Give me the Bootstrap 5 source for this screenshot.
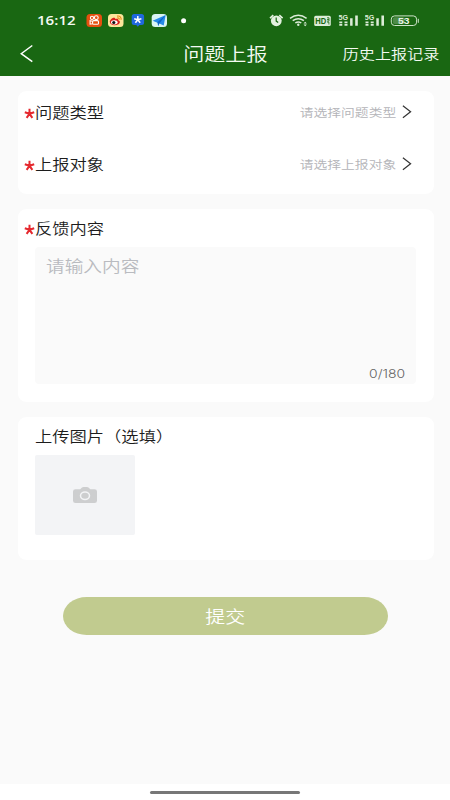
<!DOCTYPE html>
<html lang="zh-CN">
<head>
<meta charset="utf-8">
<meta name="viewport" content="width=device-width, initial-scale=1">
<title>问题上报</title>
<link href="https://cdn.jsdelivr.net/npm/bootstrap@5.3.0/dist/css/bootstrap.min.css" rel="stylesheet">
<style>
  body { font-family: "Noto Sans CJK SC", sans-serif; font-weight: 350; background: #fafafa; color: #1c1c1c; }
  .screen { width: 450px; height: 800px; overflow: hidden; }
  .top { background: #196712; height: 75.5px; color: #f4faf2; }
  .status { height: 40px; padding-left: 37px; }
  .clock { font: 600 13px/16px "Open Sans", sans-serif; width: 49px; }
  .titlebar { height: 26px; }
  .side { width: 120px; }
  /* wide-set lettering */
  .wide { display: inline-block; white-space: nowrap; transform: scaleX(1.16); transform-origin: left center; }
  .wide-end { transform-origin: right center; }
  .wide-mid { transform-origin: center; }
  .t18 { font-size: 18.2px; line-height: 26px; }
  .t14 { font-size: 13.9px; line-height: 22px; margin-right: 3px; }
  .t12 { font-size: 11.9px; line-height: 20px; color: #b4b4b8; margin-right: 6px; }
  .t15 { font-size: 14.9px; line-height: 22px; }
  .t16 { font-size: 16.1px; line-height: 24px; color: #b9bbc0; }
  .t17 { font-size: 17.2px; line-height: 26px; }
  .count { font: 300 12px/16px Inter, sans-serif; color: #666; }
  .panel { background: #fff; border-radius: 9px/8px; margin: 0 16px 15px 18px; padding: 0 18px 0 17px; }
  .panel-pick { height: 103px; padding: 10px 22px 0 6px; }
  .panel-text { height: 193px; padding-left: 6px; padding-top: 8px; }
  .panel-photo { height: 143px; padding-top: 8px; }
  .pick { height: 22px; margin-bottom: 30px; }
  .star { width: 11px; height: 11px; margin-top: 2px; }
  .entry { margin: 8px 0 0 11px; height: 137px; background: #fafafa; border-radius: 4px; padding: 6px 11px 2px 11px; }
  .upload { width: 100px; height: 80px; background: #f3f4f6; border-radius: 2px; margin-top: 8px; }
  .form-body { padding-top: 15.5px; }
  .submit { width: 325px; height: 38.5px; margin: 21.5px 0 0 63px; background: #c1cb8f; color: #fff; border-radius: 24px/19.25px; font-weight: 350; }
  .submit:hover { background: #b7c283; color: #fff; }
  .homebar { height: 16px; background: #fff; }
  .homebar div { width: 150px; height: 3px; background: #777; border-radius: 2px; }
</style>
</head>
<body>
<svg width="0" height="0" class="position-absolute" aria-hidden="true">
  <defs>
    <symbol id="asterisk" viewBox="0 0 11 11"><path d="M5.500 5.800V.8M5.500 5.800L.8 4.200M5.500 5.800l4.700-1.600M5.500 5.800L2.600 9.800M5.500 5.800l2.900 4" stroke="#e5282e" stroke-width="2" fill="none"/></symbol>
    <symbol id="next" viewBox="0 0 10 14"><path d="M.9.8L8.600 6.700.9 12.800" stroke="#333" stroke-width="1.200" fill="none"/></symbol>
    <symbol id="signal" viewBox="0 0 20 13"><path d="M.8 7.200h3v4.300h-3zM6 7.200h3v4.300H6zM11.600 4h2.500v7.500h-2.500zM16.700 1.200h2.600v10.300h-2.600z" fill="#dcecd8"/><path d="M0 9.200h9.500" stroke="#196712" stroke-width=".7"/><text x="0" y="5.600" font-family="Liberation Sans, sans-serif" font-size="7" font-weight="700" textLength="9.500" lengthAdjust="spacingAndGlyphs" fill="#dcecd8">5G</text></symbol>
  </defs>
</svg>
<div class="screen d-flex flex-column">
  <header class="top">
    <div class="status d-flex align-items-center">
      <div class="clock"><span class="wide">16:12</span></div>
      <svg width="364" height="20" viewBox="86 10 364 20">
        <rect x="86.500" y="14" width="15.500" height="13" rx="3.500" fill="#e5500f"/>
        <g fill="none" stroke="#fff" stroke-width="1.100"><circle cx="92" cy="17.900" r="1.600"/><circle cx="96.300" cy="17.700" r="1.900"/><rect x="92.600" y="20.600" width="5.900" height="3.700" rx="1.100"/><path d="M92.600 21.300l-2.500-.6v3.500l2.500-.5"/></g>
        <rect x="108" y="14" width="15.500" height="13" rx="3.500" fill="#fbe69a"/>
        <path d="M109.800 21.800c0-2 3-4.400 4.700-4 .8.200.7.900.6 1.300 1.400-.6 3.500-.6 3.200 1.100 3 .8 1.700 5-3.600 5-2.700 0-4.900-1.200-4.900-3.400z" fill="#d8211c"/><ellipse cx="114.300" cy="22.300" rx="3.300" ry="2.100" fill="#fff"/><circle cx="113.800" cy="22.500" r="1.600" fill="#111"/><path d="M117 16.100c2.700-.7 4.800 1.300 4 3.800M117.300 17.900c1.300-.2 2.200.6 1.900 1.700" stroke="#e88a18" stroke-width="1.100" fill="none"/>
        <path d="M134.200 14h7.400a2.500 2.500 0 012.500 2.500v6a2.500 2.500 0 01-2.500 2.500h-2.100l-1.700 1.800-1.600-1.800h-2a2.500 2.500 0 01-2.500-2.500v-6a2.500 2.500 0 012.500-2.500z" fill="#2068de"/>
        <path d="M137.800 19.700v-3.800m0 3.800l-3.600-1m3.600 1l3.600-1m-3.600 1l-2.400 3.100m2.400-3.100l2.400 3.100" stroke="#fff" stroke-width="1.500"/>
        <rect x="151.700" y="14" width="15.300" height="13" rx="3.500" fill="#d9f5f4"/>
        <path d="M152.600 20.800L165.700 15l-2 10.600-4.300-2.200z" fill="#258be8"/><path d="M159.400 23.400l6.300-8.400-8.300 7.300.8 3.900z" fill="#0c65c6"/>
        <circle cx="183.600" cy="20.700" r="2.500" fill="#fff"/>
        <g fill="#e3f1df"><circle cx="276.300" cy="20.800" r="5.400"/><path d="M270 18.200l3.300-3M282.600 18.200l-3.300-3" stroke="#e3f1df" stroke-width="1.600"/><path d="M276.200 17.600v3.500l2 1.500" stroke="#196712" stroke-width="1.200" fill="none"/></g>
        <g fill="none" stroke="#dcecd8" stroke-width="1.500"><path d="M290 18.300q8.300-6 16.600 0M292.700 20.700q5.600-4 11.200 0M295.300 23q3-2.200 6 0"/></g><circle cx="298.300" cy="24.800" r="1.200" fill="#dcecd8"/><path d="M303.500 23.600l1.700-1.800 1.700 1.800zM303.500 24.500l1.700 1.800 1.700-1.800z" fill="#dcecd8"/>
        <rect x="314.200" y="15.700" width="16.600" height="10.300" rx="1.500" fill="#dcecd8"/><text x="315.300" y="24.100" font-family="Liberation Sans, sans-serif" font-size="8.500" font-weight="700" textLength="11" lengthAdjust="spacingAndGlyphs" fill="#196712">HD</text><path d="M327 17.800h2v1.700h-2m2 0v1.600h-2M327.200 22.200h1.700v2.300" stroke="#196712" stroke-width=".8" fill="none"/>
        <use href="#signal" x="338.500" y="14.300" width="20" height="13"/><use href="#signal" x="364.700" y="14.300" width="20" height="13"/>
        <rect x="391.300" y="15.900" width="25.300" height="9.600" rx="3.300" fill="none" stroke="#cfe3ca"/><rect x="392.800" y="17.300" width="12" height="6.800" rx="2" fill="#4d8b47"/><path d="M418.300 18.800v4" stroke="#cfe3ca" stroke-width="1"/><text x="398" y="23.600" font-family="Liberation Sans, sans-serif" font-size="8.200" font-weight="700" textLength="11.500" lengthAdjust="spacingAndGlyphs" fill="#e9f5e6">53</text>
      </svg>
    </div>
    <div class="titlebar d-flex align-items-center justify-content-between">
      <div class="side ps-3"><svg class="d-block ms-1" width="16" height="20" viewBox="0 0 16 20"><path d="M12.300 2.500L1.200 10.700l11.100 8" stroke="#fff" stroke-width="1.500" fill="none"/></svg></div>
      <span class="wide wide-mid t18">问题上报</span>
      <div class="side d-flex justify-content-end pe-2"><span class="wide wide-end t14">历史上报记录</span></div>
    </div>
  </header>
  <main class="form-body flex-grow-1 d-flex flex-column">
    <section class="panel panel-pick">
      <div class="pick d-flex align-items-center">
        <svg class="star"><use href="#asterisk"/></svg><span class="wide t15">问题类型</span>
        <span class="wide wide-end t12 ms-auto">请选择问题类型</span><svg width="10" height="14"><use href="#next"/></svg>
      </div>
      <div class="pick d-flex align-items-center">
        <svg class="star"><use href="#asterisk"/></svg><span class="wide t15">上报对象</span>
        <span class="wide wide-end t12 ms-auto">请选择上报对象</span><svg width="10" height="14"><use href="#next"/></svg>
      </div>
    </section>
    <section class="panel panel-text">
      <div class="d-flex align-items-center"><svg class="star"><use href="#asterisk"/></svg><span class="wide t15">反馈内容</span></div>
      <div class="entry d-flex flex-column justify-content-between">
        <div class="d-flex"><span class="wide t16">请输入内容</span></div>
        <div class="d-flex justify-content-end"><span class="wide wide-end count">0/180</span></div>
      </div>
    </section>
    <section class="panel panel-photo">
      <div class="d-flex"><span class="wide t15">上传图片（选填）</span></div>
      <div class="upload d-flex align-items-center justify-content-center">
        <svg width="24" height="16" viewBox="0 0 24 16"><path fill="#cdcecf" d="M2.500 2.200h4.700L9 .6Q9.600 0 10.500 0h3.500q.9 0 1.500.6l1.800 1.600h4.200Q24 2.200 24 4.400v9.400q0 2.200-2.500 2.200h-19Q0 16 0 13.800V4.400q0-2.200 2.500-2.200z"/><ellipse cx="12" cy="8.700" rx="4.500" ry="3.700" fill="none" stroke="#f3f4f6" stroke-width="1.500"/></svg>
      </div>
    </section>
    <button type="button" class="btn submit border-0 p-0 flex-shrink-0"><span class="wide wide-mid t17">提交</span></button>
  </main>
  <footer class="homebar d-flex align-items-center justify-content-center"><div></div></footer>
</div>
<script src="https://cdn.jsdelivr.net/npm/bootstrap@5.3.0/dist/js/bootstrap.bundle.min.js"></script>
</body>
</html>
